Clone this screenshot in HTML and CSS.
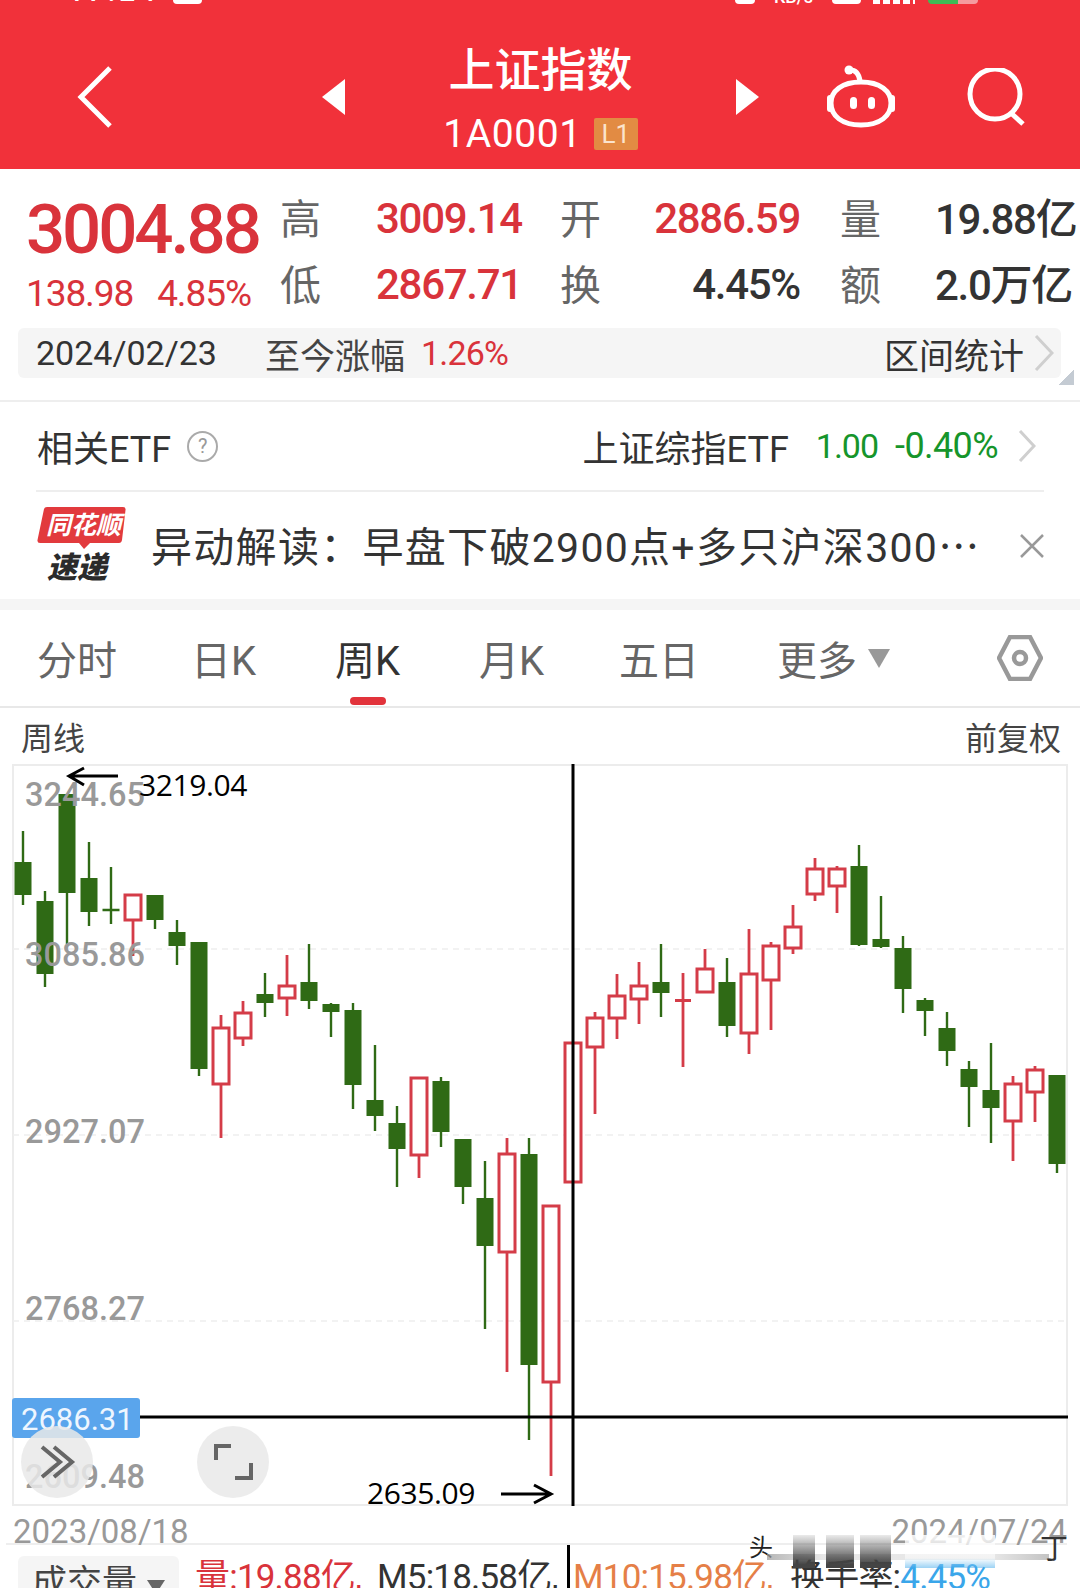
FILE: index.html
```html
<!DOCTYPE html>
<html lang="zh-CN">
<head>
  <meta charset="UTF-8">
  <title>上证指数</title>
  <link rel="stylesheet" href="styles.css">
</head>
<body>
<div class="page">

  <header class="topbar">
    <div class="status">
      <span class="status-time">17:24</span>
      <span class="status-lock"></span>
      <span class="status-dot"></span>
      <span class="status-speed">KB/s</span>
      <span class="status-wifi"></span>
      <span class="status-signal"></span>
      <span class="status-battery"></span>
    </div>
    <svg class="ico-back" viewBox="0 0 36 62"><path d="M33 2 4 31l29 29"/></svg>
    <svg class="ico-prev" viewBox="0 0 23 36"><path d="M23 0V36L0 18z"/></svg>
    <div class="title">
      <div class="title-name">上证指数</div>
      <div class="title-code">1A0001<span class="badge">L1</span></div>
    </div>
    <svg class="ico-next" viewBox="0 0 23 36"><path d="M0 0V36L23 18z"/></svg>
    <svg class="ico-robot" viewBox="0 0 70 64">
      <path d="M24 5c6 0 9 4 10 11"/>
      <circle class="solid" cx="23" cy="5" r="4.500"/>
      <path d="M35 17C54 17 65 26 65 38 65 51 54 60 35 60 16 60 5 51 5 38 5 26 16 17 35 17z"/>
      <rect class="solid" x="1" y="30" width="6" height="17" rx="3"/>
      <rect class="solid" x="63" y="30" width="6" height="17" rx="3"/>
      <rect class="solid" x="24" y="32" width="7" height="12" rx="3.500"/>
      <rect class="solid" x="42" y="32" width="7" height="12" rx="3.500"/>
    </svg>
    <svg class="ico-search" viewBox="0 0 60 58"><circle cx="29" cy="26" r="25"/><path d="M46 46 57 56"/></svg>
  </header>

  <section class="quote">
    <div class="quote-main">
      <div class="price">3004.88</div>
      <div class="change"><span>138.98</span><span>4.85%</span></div>
    </div>
    <div class="quote-grid">
      <span class="q-label">高</span><span class="q-val red">3009.14</span>
      <span class="q-label">开</span><span class="q-val red q-right">2886.59</span>
      <span class="q-label">量</span><span class="q-val q-cjk">19.88亿</span>
      <span class="q-label">低</span><span class="q-val red">2867.71</span>
      <span class="q-label">换</span><span class="q-val q-right">4.45%</span>
      <span class="q-label">额</span><span class="q-val q-cjk">2.0万亿</span>
    </div>
  </section>

  <div class="range">
    <span class="range-date">2024/02/23</span>
    <span class="range-label">至今涨幅</span>
    <span class="range-pct">1.26%</span>
    <span class="range-link">区间统计</span>
    <svg class="chev range-chev" viewBox="0 0 20 36"><path d="M2 1 18 18 2 35"/></svg>
    <span class="range-corner"></span>
  </div>

  <div class="etf">
    <div class="etf-row">
      <span class="etf-title">相关ETF</span>
      <span class="help">?</span>
      <span class="etf-name">上证综指ETF</span>
      <span class="etf-price">1.00</span>
      <span class="etf-pct">-0.40%</span>
      <svg class="chev etf-chev" viewBox="0 0 18 32"><path d="M2 1 16 16 2 31"/></svg>
    </div>
  </div>

  <div class="news">
    <svg class="news-logo" viewBox="0 0 90 74">
      <path class="logo-flag" d="M7 2Q7.500 0 10 0H86Q89 0 88.500 3L85 33Q84.500 36 82 36H53L47 42 42 36H3Q0 36 .5 33z"/>
      <text class="logo-top" x="9" y="27">同花顺</text>
      <text class="logo-bottom" x="10" y="71">速递</text>
    </svg>
    <span class="news-text">异动解读：早盘下破2900点+多只沪深300⋯</span>
    <svg class="news-close" viewBox="0 0 24 24"><path d="M1 1 23 23M23 1 1 23"/></svg>
  </div>

  <nav class="tabs">
    <span class="tab">分时</span>
    <span class="tab">日K</span>
    <span class="tab active">周K</span>
    <span class="tab">月K</span>
    <span class="tab">五日</span>
    <span class="tab">更多<i class="tab-caret"></i></span>
    <svg class="ico-hex" viewBox="0 0 46 46"><path d="M13 2H33L44 23 33 44H13L2 23z"/><circle cx="23" cy="23" r="6"/></svg>
  </nav>

  <div class="chart-head">
    <span>周线</span>
    <span>前复权</span>
  </div>

  <svg class="chart" viewBox="0 765 1080 742">
    <rect class="frame" x="13" y="766" width="1054" height="740"/>
    <path class="grid" d="M13 950H1067M13 1136H1067M13 1322H1067"/>

    <g class="bars-down">
      <path d="M23 832V906M45 892V988M67 795V945M89 843V927M111 868V925M102.500 911H119.500M155 896V930M177 921V966M199 943V1077M265 974V1018M309 945V1010M331 1004V1038M353 1004V1110M375 1046V1132M397 1107V1188M441 1078V1148M463 1140V1205M485 1162V1330M529 1139V1441M661 945V1018M727 959V1038M859 846V947M881 897V949M903 937V1014M925 999V1037M947 1013V1067M969 1062V1128M991 1044V1144M1057 1076V1174"/>
      <rect x="14.500" y="863" width="17" height="33"/>
      <rect x="36.500" y="902" width="17" height="73"/>
      <rect x="58.500" y="795" width="17" height="99"/>
      <rect x="80.500" y="879" width="17" height="34"/>
      <rect x="146.500" y="896" width="17" height="25"/>
      <rect x="168.500" y="933" width="17" height="14"/>
      <rect x="190.500" y="943" width="17" height="127"/>
      <rect x="256.500" y="995" width="17" height="9"/>
      <rect x="300.500" y="983" width="17" height="19"/>
      <rect x="322.500" y="1005" width="17" height="8"/>
      <rect x="344.500" y="1011" width="17" height="75"/>
      <rect x="366.500" y="1101" width="17" height="16"/>
      <rect x="388.500" y="1124" width="17" height="26"/>
      <rect x="432.500" y="1082" width="17" height="51"/>
      <rect x="454.500" y="1140" width="17" height="48"/>
      <rect x="476.500" y="1199" width="17" height="48"/>
      <rect x="520.500" y="1155" width="17" height="211"/>
      <rect x="652.500" y="983" width="17" height="11"/>
      <rect x="718.500" y="983" width="17" height="44"/>
      <rect x="850.500" y="867" width="17" height="79"/>
      <rect x="872.500" y="940" width="17" height="8"/>
      <rect x="894.500" y="949" width="17" height="41"/>
      <rect x="916.500" y="1001" width="17" height="11"/>
      <rect x="938.500" y="1029" width="17" height="23"/>
      <rect x="960.500" y="1070" width="17" height="18"/>
      <rect x="982.500" y="1091" width="17" height="18"/>
      <rect x="1048.500" y="1076" width="17" height="89"/>
    </g>

    <g class="bars-up">
      <path d="M133 895V957M221 1016V1139M243 1002V1047M287 956V1017M419 1078V1179M507 1139V1373M551 1206V1477M595 1013V1115M617 975V1040M639 963V1025M683 974V1068M675 1001.500H691M705 950V969M749 930V1055M771 943V1031M793 906V955M815 859V902M837 867V914M1013 1077V1162M1035 1067V1123"/>
      <rect x="125" y="896" width="16" height="25"/>
      <rect x="213" y="1029" width="16" height="56"/>
      <rect x="235" y="1014" width="16" height="25"/>
      <rect x="279" y="987" width="16" height="12"/>
      <rect x="411" y="1079" width="16" height="77"/>
      <rect x="499" y="1155" width="16" height="98"/>
      <rect x="543" y="1207" width="16" height="176"/>
      <rect x="565" y="1044" width="16" height="139"/>
      <rect x="587" y="1019" width="16" height="29"/>
      <rect x="609" y="997" width="16" height="22"/>
      <rect x="631" y="987" width="16" height="13"/>
      <rect x="697" y="970" width="16" height="23"/>
      <rect x="741" y="975" width="16" height="59"/>
      <rect x="763" y="947" width="16" height="34"/>
      <rect x="785" y="928" width="16" height="21"/>
      <rect x="807" y="870" width="16" height="25"/>
      <rect x="829" y="870" width="16" height="17"/>
      <rect x="1005" y="1085" width="16" height="37"/>
      <rect x="1027" y="1071" width="16" height="22"/>
    </g>

    <path class="cross" d="M573 765V1507M140 1418H1068"/>

    <text class="axis" x="25" y="807">3244.65</text>
    <text class="axis" x="25" y="967">3085.86</text>
    <text class="axis" x="25" y="1144">2927.07</text>
    <text class="axis" x="25" y="1321">2768.27</text>
    <text class="axis" x="25" y="1489">2609.48</text>

    <rect class="price-tag" x="12" y="1399" width="128" height="40" rx="3"/>
    <text class="price-tag-text" x="21" y="1431">2686.31</text>

    <circle class="round-btn" cx="57" cy="1463" r="36"/>
    <path class="round-ico" d="M42 1451 60 1466 42 1481M54 1451 72 1466 54 1481" transform="translate(0 -3)"/>
    <circle class="round-btn" cx="233" cy="1463" r="36"/>
    <path class="round-ico" d="M216 1461V1447H231M251 1464V1479H235"/>

    <path class="note-arrow" d="M118 777H70M84 769 69 777 84 786"/>
    <text class="note" x="139" y="797">3219.04</text>
    <text class="note" x="367" y="1505">2635.09</text>
    <path class="note-arrow" d="M501 1495H550M534 1486 551 1495 534 1504"/>
  </svg>

  <div class="dates">
    <span>2023/08/18</span>
    <span>2024/07/24</span>
  </div>

  <div class="volume">
    <span class="vol-chip">成交量<i class="vol-caret"></i></span>
    <span class="vol-red">量:19.88亿,</span>
    <span class="vol-dark">M5:18.58亿,</span>
    <span class="vol-orange">M10:15.98亿,</span>
    <span class="vol-dark">换手率:<b class="vol-blue">4.45%</b></span>
  </div>

  <div class="watermark">
    <span class="wm-tou">头</span>
    <i class="wm-smear"></i>
    <i class="wm-block wm-a"></i>
    <i class="wm-block wm-b"></i>
    <i class="wm-block wm-c"></i>
    <i class="wm-fade"></i>
    <span class="wm-ding">丁</span>
  </div>

</div>
</body>
</html>
```

FILE: styles.css
```css
* {
  box-sizing: border-box;
}

body {
  margin: 0;
  background-color: #fff;
  font-family: Roboto, "Noto Sans CJK SC", sans-serif;
  color: #333;
}

.page {
  position: relative;
  width: 1080px;
  height: 1588px;
  overflow: hidden;
}

/* top red bar */
.topbar {
  position: relative;
  display: flex;
  align-items: center;
  height: 169px;
  padding-top: 24px;
  background-color: #f1313a;
  color: #fff;
}

.status span {
  position: absolute;
  top: 0;
  display: block;
}

.status-time {
  left: 68px;
  top: -22px !important;
  font-size: 28px;
  line-height: 28px;
  font-weight: 500;
  letter-spacing: 4px;
}

.status-lock {
  left: 173px;
  width: 29px;
  height: 4px;
  background-color: #fff;
  border-radius: 0 0 6px 6px;
}

.status-dot {
  left: 735px;
  width: 20px;
  height: 4px;
  background-color: #fff;
  border-radius: 0 0 10px 10px;
}

.status-speed {
  left: 774px;
  top: -12px !important;
  font-size: 18px;
  line-height: 18px;
  font-weight: 500;
}

.status-wifi {
  left: 832px;
  width: 29px;
  height: 4px;
  background-color: #fff;
  border-radius: 0 0 6px 6px;
}

.status-signal {
  left: 873px;
  width: 42px;
  height: 4px;
  background: repeating-linear-gradient(90deg, #fff 0 7px, #f1313a 7px 10px);
}

.status-battery {
  left: 928px;
  width: 50px;
  height: 4px;
  background: linear-gradient(90deg, #3dbb55 0 60%, #f59a9e 60%);
  border-radius: 0 0 6px 6px;
}

.topbar svg {
  flex: none;
  fill: none;
  stroke: #fff;
  stroke-width: 5;
}

.ico-back {
  width: 36px;
  height: 62px;
  margin-left: 77px;
}

.topbar .ico-prev,
.topbar .ico-next {
  width: 23px;
  height: 36px;
  fill: #fff;
  stroke: none;
}

.ico-prev {
  margin-left: 209px;
}

.title {
  width: 391px;
  margin-top: 2px;
  text-align: center;
}

.title-name {
  font-size: 46px;
  line-height: 56px;
  font-weight: 500;
}

.title-code {
  display: flex;
  justify-content: center;
  align-items: center;
  height: 40px;
  margin-top: 16px;
  font-size: 39px;
  letter-spacing: .6px;
}

.badge {
  width: 44px;
  height: 32px;
  margin-left: 12px;
  background-color: #e28b43;
  border-radius: 2px;
  color: #fbe3cc;
  font-size: 26px;
  line-height: 32px;
  letter-spacing: 0;
}

.ico-robot {
  width: 70px;
  height: 64px;
  margin-left: 67px;
}

.topbar .ico-robot .solid {
  fill: #fff;
  stroke: none;
}

.ico-search {
  width: 60px;
  height: 58px;
  margin-left: 70px;
}

/* quote numbers */
.quote {
  display: flex;
  height: 159px;
  padding: 16px 0 0 26px;
}

.quote-main {
  width: 255px;
}

.price {
  margin-top: 13px;
  font-size: 69px;
  line-height: 64px;
  font-weight: 500;
  letter-spacing: -3.1px;
  color: #d9333b;
}

.change {
  display: flex;
  gap: 24px;
  margin-top: 12px;
  font-size: 37px;
  line-height: 40px;
  letter-spacing: -1.1px;
  color: #d9333b;
}

.quote-grid {
  display: grid;
  grid-template-columns: 96px 184px 79px 201px 95px 145px;
  grid-auto-rows: 66px;
  align-items: center;
  white-space: nowrap;
}

.q-label {
  padding-bottom: 4px;
  font-size: 41px;
  color: #666;
}

.q-val {
  font-size: 42px;
  font-weight: 500;
  letter-spacing: -1.3px;
  color: #333;
}

.q-cjk {
  padding-bottom: 5px;
}

.q-val.red {
  color: #d9333b;
}

.q-right {
  padding-right: 40px;
  text-align: right;
}

/* interval bar */
.range {
  position: relative;
  display: flex;
  align-items: center;
  width: 1043px;
  height: 50px;
  margin-left: 18px;
  padding-left: 18px;
  background-color: #f5f5f5;
  border-radius: 6px;
}

.range-date {
  width: 229px;
  font-size: 34px;
  color: #333;
}

.range-label {
  font-size: 35px;
  color: #444;
}

.range-pct {
  margin-left: 16px;
  font-size: 34px;
  letter-spacing: -.8px;
  color: #d9333b;
}

.range-link {
  margin-left: auto;
  font-size: 35px;
  color: #333;
}

.chev {
  flex: none;
  fill: none;
  stroke: #cfcfcf;
  stroke-width: 3;
}

.range-chev {
  width: 20px;
  height: 36px;
  margin: 0 7px 0 10px;
}

.range-corner {
  position: absolute;
  right: -13px;
  bottom: -7px;
  width: 15px;
  height: 15px;
  background: linear-gradient(135deg, transparent 50%, #c4cbd3 50%);
}

/* related etf */
.etf {
  position: relative;
  height: 92px;
  margin-top: 22px;
  padding: 0 36px;
  border-top: 2px solid #eee;
}

.etf-row {
  display: flex;
  align-items: center;
  height: 90px;
  padding-left: 1px;
  border-bottom: 2px solid #eee;
  white-space: nowrap;
}

.etf-title {
  font-size: 36px;
  color: #333;
}

.help {
  width: 31px;
  height: 31px;
  margin-left: 16px;
  border: 2px solid #aaa;
  border-radius: 50%;
  text-align: center;
  font-size: 20px;
  line-height: 27px;
  color: #999;
}

.etf-name {
  margin-left: auto;
  font-size: 36px;
  color: #333;
}

.etf-price {
  margin-left: 27px;
  font-size: 34px;
  letter-spacing: -1px;
  color: #16952b;
}

.etf-pct {
  margin-left: 17px;
  font-size: 36px;
  letter-spacing: -.6px;
  color: #16952b;
}

.etf-chev {
  width: 18px;
  height: 32px;
  margin: 0 8px 0 20px;
}

/* news strip */
.news {
  display: flex;
  align-items: center;
  height: 118px;
  padding: 0 0 3px 37px;
  border-bottom: 11px solid #f5f5f5;
  white-space: nowrap;
}

.news-logo {
  flex: none;
  width: 90px;
  height: 74px;
}

.logo-flag {
  fill: #e23a3d;
}

.logo-top {
  font-size: 25px;
  font-weight: 700;
  font-style: italic;
  fill: #fff;
}

.logo-bottom {
  font-size: 30px;
  font-weight: 900;
  font-style: italic;
  fill: #2b2b2b;
}

.news-text {
  margin-left: 24px;
  font-size: 41px;
  letter-spacing: 1.3px;
  color: #333;
}

.news-close {
  position: absolute;
  left: 1020px;
  top: 534px;
  width: 24px;
  height: 24px;
  fill: none;
  stroke: #999;
  stroke-width: 2.500;
}

/* period tabs */
.tabs {
  position: relative;
  display: grid;
  grid-template-columns: 154px 144px 144px 140px 158px 219px auto;
  align-items: center;
  height: 98px;
  padding: 0 0 0 37px;
  border-bottom: 2px solid #e8e8e8;
}

.tab {
  position: relative;
  font-size: 40px;
  color: #666;
}

.tab.active {
  color: #333;
}

.tab.active::after {
  content: "";
  position: absolute;
  left: 15px;
  bottom: -18px;
  width: 36px;
  height: 8px;
  background-color: #e2333b;
  border-radius: 4px;
}

.tab-caret {
  position: absolute;
  left: 91px;
  top: 20px;
  border-left: 11px solid transparent;
  border-right: 11px solid transparent;
  border-top: 19px solid #999;
}

.ico-hex {
  width: 46px;
  height: 46px;
  margin-left: 1px;
  fill: none;
  stroke: #999;
  stroke-width: 4.500;
}

.chart-head {
  display: flex;
  justify-content: space-between;
  align-items: center;
  height: 56px;
  padding: 0 19px 0 21px;
  font-size: 32px;
  color: #444;
}

/* k-line chart */
.chart {
  display: block;
  width: 1080px;
  height: 742px;
}

.frame {
  fill: none;
  stroke: #ececec;
  stroke-width: 2;
}

.grid {
  fill: none;
  stroke: #eee;
  stroke-width: 1.500;
  stroke-dasharray: 6 5;
}

.bars-down path {
  fill: none;
  stroke: #2f6a15;
  stroke-width: 2.400;
}

.bars-down rect {
  fill: #2f6a15;
}

.bars-up path {
  fill: none;
  stroke: #d43c48;
  stroke-width: 2.800;
}

.bars-up rect {
  fill: #fff;
  stroke: #d43c48;
  stroke-width: 3;
}

.cross {
  fill: none;
  stroke: #000;
  stroke-width: 3;
}

.axis {
  font-size: 32.500px;
  font-weight: 500;
  fill: #999;
}

.price-tag {
  fill: #5aa5ec;
}

.price-tag-text {
  font-size: 31px;
  fill: #eef6ff;
}

.round-btn {
  fill: #e9e9e9;
  fill-opacity: .85;
}

.round-ico {
  fill: none;
  stroke: #666;
  stroke-width: 4;
}

.note {
  font-family: "Open Sans", sans-serif;
  font-size: 30px;
  letter-spacing: -.4px;
  fill: #000;
}

.note-arrow {
  fill: none;
  stroke: #000;
  stroke-width: 3;
}

.dates {
  display: flex;
  justify-content: space-between;
  align-items: flex-start;
  height: 37px;
  padding: 0 13px;
  font-size: 33px;
  line-height: 52px;
  color: #999;
}

.volume {
  display: grid;
  grid-template-columns: 177px 182px 190px 223px auto;
  width: 1061px;
  height: 44px;
  margin-left: 6px;
  padding-left: 12px;
  border-top: 2px solid #eee;
  font-size: 35px;
  line-height: 44px;
  letter-spacing: -.8px;
  white-space: nowrap;
}

.volume > span {
  padding-top: 11px;
}

.volume > span:first-child {
  padding-top: 0;
}

.vol-chip {
  position: relative;
  display: block;
  width: 161px;
  height: 50px;
  margin-top: 11px;
  padding-left: 14px;
  background-color: #f5f5f5;
  border-radius: 6px;
  font-size: 35px;
  line-height: 56px;
  letter-spacing: 0;
  color: #444;
}

.vol-caret {
  position: absolute;
  left: 129px;
  top: 24px;
  border-left: 9px solid transparent;
  border-right: 9px solid transparent;
  border-top: 14px solid #666;
}

.vol-red {
  color: #d9333b;
}

.vol-dark {
  color: #333;
}

.vol-orange {
  padding-left: 3px;
  border-left: 3px solid #000;
  color: #e57f47;
}

.vol-blue {
  font-weight: 400;
  color: #3aa6ea;
}

/* blurred watermark at the corner */
.watermark i,
.watermark span {
  position: absolute;
  display: block;
}

.wm-tou {
  left: 749px;
  top: 1532px;
  font-size: 24px;
  line-height: 32px;
  color: #222;
}

.wm-ding {
  left: 1040px;
  top: 1534px;
  font-size: 28px;
  line-height: 32px;
  color: #333;
}

.wm-smear {
  left: 767px;
  top: 1554px;
  width: 282px;
  height: 6px;
  background: linear-gradient(90deg, #999, #ddd 20%, #ddd 80%, #aaa);
  opacity: .7;
}

.wm-block {
  top: 1535px;
  height: 33px;
  background: linear-gradient(180deg, rgba(60, 60, 60, .1), #444 90%);
}

.wm-a {
  left: 793px;
  width: 22px;
}

.wm-b {
  left: 826px;
  width: 28px;
}

.wm-c {
  left: 860px;
  width: 31px;
}

.wm-fade {
  left: 905px;
  top: 1535px;
  width: 90px;
  height: 33px;
  background: linear-gradient(180deg, rgba(255, 255, 255, .85), rgba(255, 255, 255, .5) 70%, rgba(58, 166, 234, .5));
}
```
